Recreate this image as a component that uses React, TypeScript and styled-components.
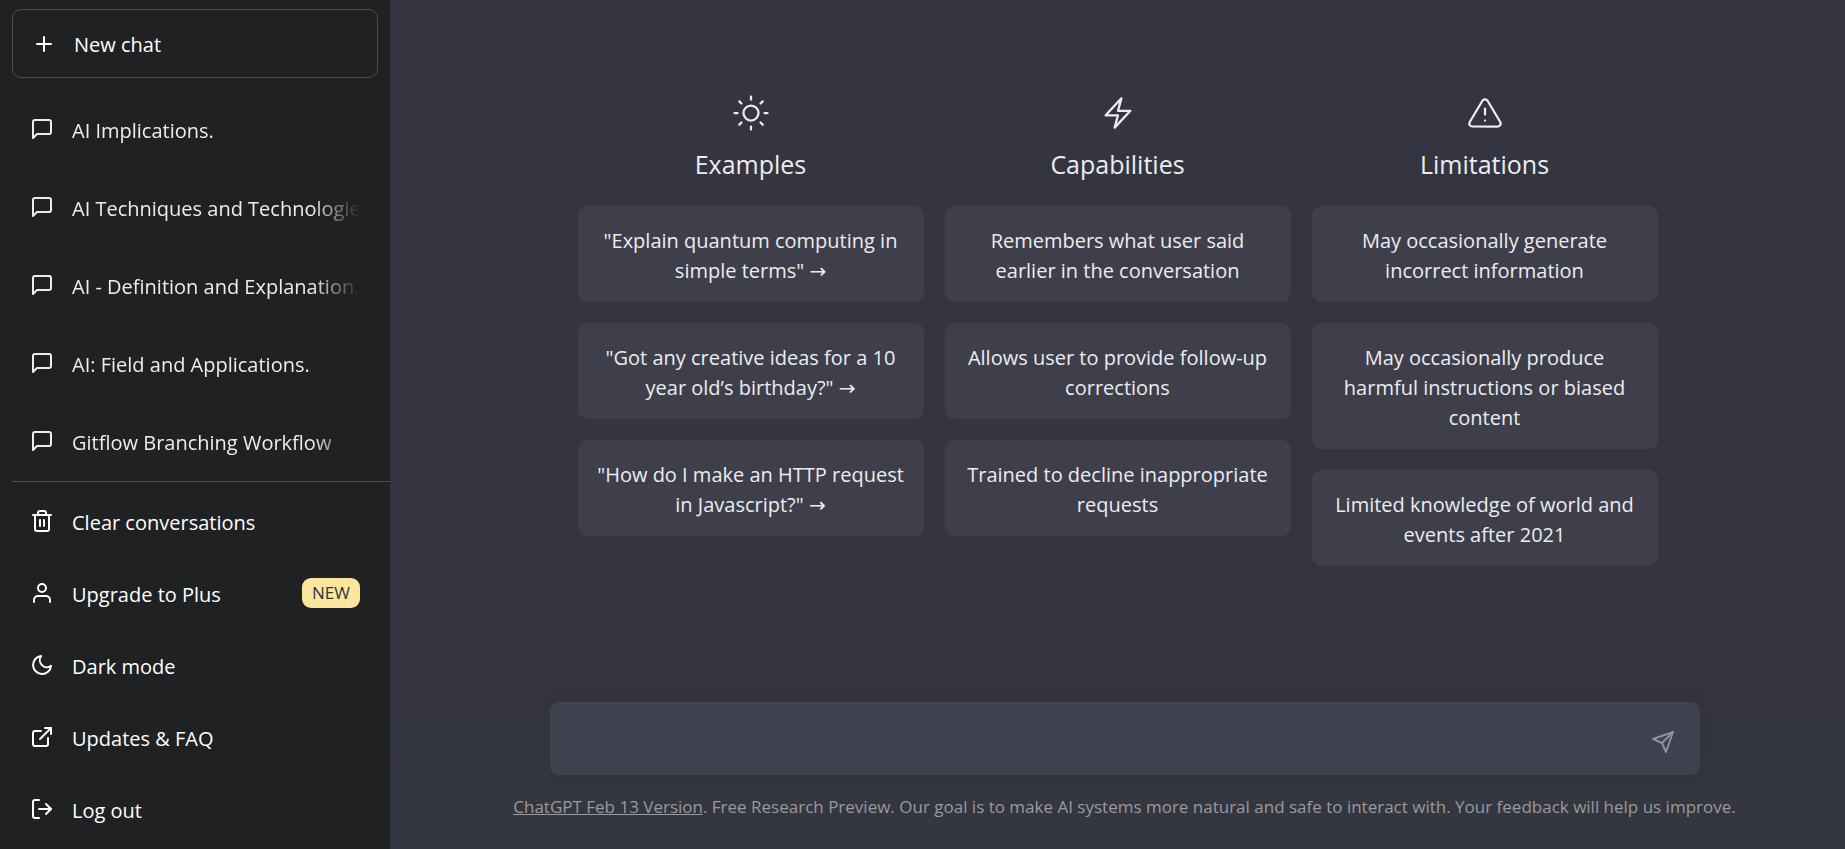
import React from "react";
import styled, { createGlobalStyle } from "styled-components";
import {
  FiAlertTriangle,
  FiExternalLink,
  FiLogOut,
  FiMessageSquare,
  FiMoon,
  FiPlus,
  FiSend,
  FiSun,
  FiTrash2,
  FiUser,
} from "react-icons/fi";

const GlobalStyle = createGlobalStyle`
  *, *::before, *::after { box-sizing: border-box; }
  body {
    margin: 0;
    background: #343541;
    font-family: "Open Sans", "DejaVu Sans", sans-serif;
    font-size: 20px;
    line-height: 30px;
    color: #ececf1;
  }
  button, textarea { font: inherit; color: inherit; }
  ul { list-style: none; margin: 0; padding: 0; }
  a { color: inherit; text-decoration: none; }
`;

const Shell = styled.div`
  display: flex;
  min-height: 100vh;
`;

const Sidebar = styled.nav`
  display: flex;
  flex-direction: column;
  flex: 0 0 390px;
  min-width: 0;
  padding: 9px 0 4px 12px;
  background: #202123;
`;

const NewChatButton = styled.button`
  display: flex;
  align-items: center;
  gap: 18px;
  height: 69px;
  margin: 0 12px 18px 0;
  padding: 0 19px;
  border: 1px solid #4d4d4f;
  border-radius: 9px;
  background: transparent;
  color: #fff;
  cursor: pointer;
`;

const Label = styled.span`
  padding-top: 3px;
`;

const History = styled.ul`
  display: flex;
  flex-direction: column;
  flex: 1;
  gap: 12px;
  padding-right: 12px;
`;

const HistoryLink = styled.a`
  display: flex;
  align-items: center;
  gap: 18px;
  height: 66px;
  padding: 0 18px;
  border-radius: 9px;

  svg { flex: none; }
`;

const HistoryTitle = styled(Label)`
  flex: 1;
  min-width: 0;
  overflow: hidden;
  white-space: nowrap;
  mask-image: linear-gradient(to left, transparent, #000 48px);
`;

const Menu = styled.ul`
  padding-top: 3px;
  border-top: 1px solid #4d4d4f;
`;

const MenuButton = styled.button`
  display: flex;
  align-items: center;
  gap: 18px;
  width: 100%;
  height: 72px;
  padding: 0 30px 0 18px;
  border: 0;
  background: transparent;
  color: #fff;
  text-align: left;
  cursor: pointer;
`;

const Badge = styled.span`
  margin-left: auto;
  padding: 0 10px;
  border-radius: 9px;
  background: #fbe69e;
  color: #343541;
  font-size: 17px;
  font-weight: 500;
`;

const Main = styled.main`
  display: flex;
  flex-direction: column;
  flex: 1;
  min-width: 0;
`;

const Welcome = styled.div`
  display: grid;
  grid-template-columns: repeat(3, minmax(0, 1fr));
  gap: 21px;
  width: 100%;
  max-width: 1080px;
  margin: 0 auto;
  padding-top: 95px;
`;

const Column = styled.section`
  display: flex;
  flex-direction: column;
  gap: 21px;
`;

const ColumnTitle = styled.h2`
  display: flex;
  flex-direction: column;
  align-items: center;
  gap: 12px;
  margin: 0;
  font-size: 25px;
  font-weight: 400;
  line-height: 42px;
`;

const CardList = styled.ul`
  display: flex;
  flex-direction: column;
  gap: 21px;
`;

const Card = styled.li`
  padding: 20px 16px 16px;
  border-radius: 9px;
  background: #3e3f4b;
  text-align: center;
`;

const PromptButton = styled.button`
  display: block;
  width: 100%;
  padding: 20px 16px 16px;
  border: 0;
  border-radius: 9px;
  background: #3e3f4b;
  text-align: center;
  cursor: pointer;
`;

const Footer = styled.footer`
  margin-top: auto;
  padding: 36px 12px 30px 26px;
  background: linear-gradient(to bottom, rgba(53, 55, 64, 0), #353740 60%);
`;

const Composer = styled.form`
  display: flex;
  align-items: flex-end;
  max-width: 1150px;
  height: 73px;
  margin: 0 auto 20px;
  padding: 0 15px 11px 24px;
  border-radius: 9px;
  background: #40414f;
  box-shadow: 0 0 22px rgba(0, 0, 0, 0.1);
`;

const MessageInput = styled.textarea`
  flex: 1;
  height: 40px;
  padding: 4px 0;
  border: 0;
  outline: 0;
  resize: none;
  background: transparent;
`;

const SendButton = styled.button`
  display: flex;
  padding: 10px;
  border: 0;
  background: transparent;
  color: #8e8ea0;
  cursor: pointer;
`;

const Notice = styled.p`
  margin: 0;
  color: #999a9e;
  font-size: 17px;
  line-height: 24px;
  text-align: center;

  a { text-decoration: underline; }
`;

const BoltIcon = () => (
  <svg
    width="36"
    height="36"
    viewBox="0 0 24 24"
    fill="none"
    stroke="currentColor"
    strokeWidth="1.5"
    strokeLinecap="round"
    strokeLinejoin="round"
    aria-hidden="true"
  >
    <path d="M3.75 13.5l10.5-11.25L12 10.5h8.25L9.75 21.75 12 13.5H3.75z" />
  </svg>
);

const chats = [
  "AI Implications.",
  "AI Techniques and Technologies",
  "AI - Definition and Explanation.",
  "AI: Field and Applications.",
  "Gitflow Branching Workflow",
];

const menu = [
  { icon: FiTrash2, label: "Clear conversations" },
  { icon: FiUser, label: "Upgrade to Plus", badge: "NEW" },
  { icon: FiMoon, label: "Dark mode" },
  { icon: FiExternalLink, label: "Updates & FAQ" },
  { icon: FiLogOut, label: "Log out" },
];

const examples = [
  '"Explain quantum computing in simple terms" →',
  '"Got any creative ideas for a 10 year old’s birthday?" →',
  '"How do I make an HTTP request in Javascript?" →',
];

const capabilities = [
  "Remembers what user said earlier in the conversation",
  "Allows user to provide follow-up corrections",
  "Trained to decline inappropriate requests",
];

const limitations = [
  "May occasionally generate incorrect information",
  "May occasionally produce harmful instructions or biased content",
  "Limited knowledge of world and events after 2021",
];

export default function App() {
  return (
    <>
      <GlobalStyle />
      <Shell>
        <Sidebar aria-label="Chats">
          <NewChatButton type="button">
            <FiPlus size={24} />
            <Label>New chat</Label>
          </NewChatButton>
          <History>
            {chats.map((title) => (
              <li key={title}>
                <HistoryLink href="#">
                  <FiMessageSquare size={24} />
                  <HistoryTitle>{title}</HistoryTitle>
                </HistoryLink>
              </li>
            ))}
          </History>
          <Menu>
            {menu.map(({ icon: Icon, label, badge }) => (
              <li key={label}>
                <MenuButton type="button">
                  <Icon size={24} />
                  <Label>{label}</Label>
                  {badge && <Badge>{badge}</Badge>}
                </MenuButton>
              </li>
            ))}
          </Menu>
        </Sidebar>
        <Main>
          <Welcome>
            <Column>
              <ColumnTitle>
                <FiSun size={36} strokeWidth={1.5} />
                Examples
              </ColumnTitle>
              <CardList>
                {examples.map((text) => (
                  <li key={text}>
                    <PromptButton type="button">{text}</PromptButton>
                  </li>
                ))}
              </CardList>
            </Column>
            <Column>
              <ColumnTitle>
                <BoltIcon />
                Capabilities
              </ColumnTitle>
              <CardList>
                {capabilities.map((text) => (
                  <Card key={text}>{text}</Card>
                ))}
              </CardList>
            </Column>
            <Column>
              <ColumnTitle>
                <FiAlertTriangle size={36} strokeWidth={1.5} />
                Limitations
              </ColumnTitle>
              <CardList>
                {limitations.map((text) => (
                  <Card key={text}>{text}</Card>
                ))}
              </CardList>
            </Column>
          </Welcome>
          <Footer>
            <Composer onSubmit={(event) => event.preventDefault()}>
              <MessageInput aria-label="Message" rows={1} />
              <SendButton type="submit" aria-label="Send message">
                <FiSend size={24} />
              </SendButton>
            </Composer>
            <Notice>
              <a href="#">ChatGPT Feb 13 Version</a>. Free Research Preview. Our goal is to make AI
              systems more natural and safe to interact with. Your feedback will help us improve.
            </Notice>
          </Footer>
        </Main>
      </Shell>
    </>
  );
}
